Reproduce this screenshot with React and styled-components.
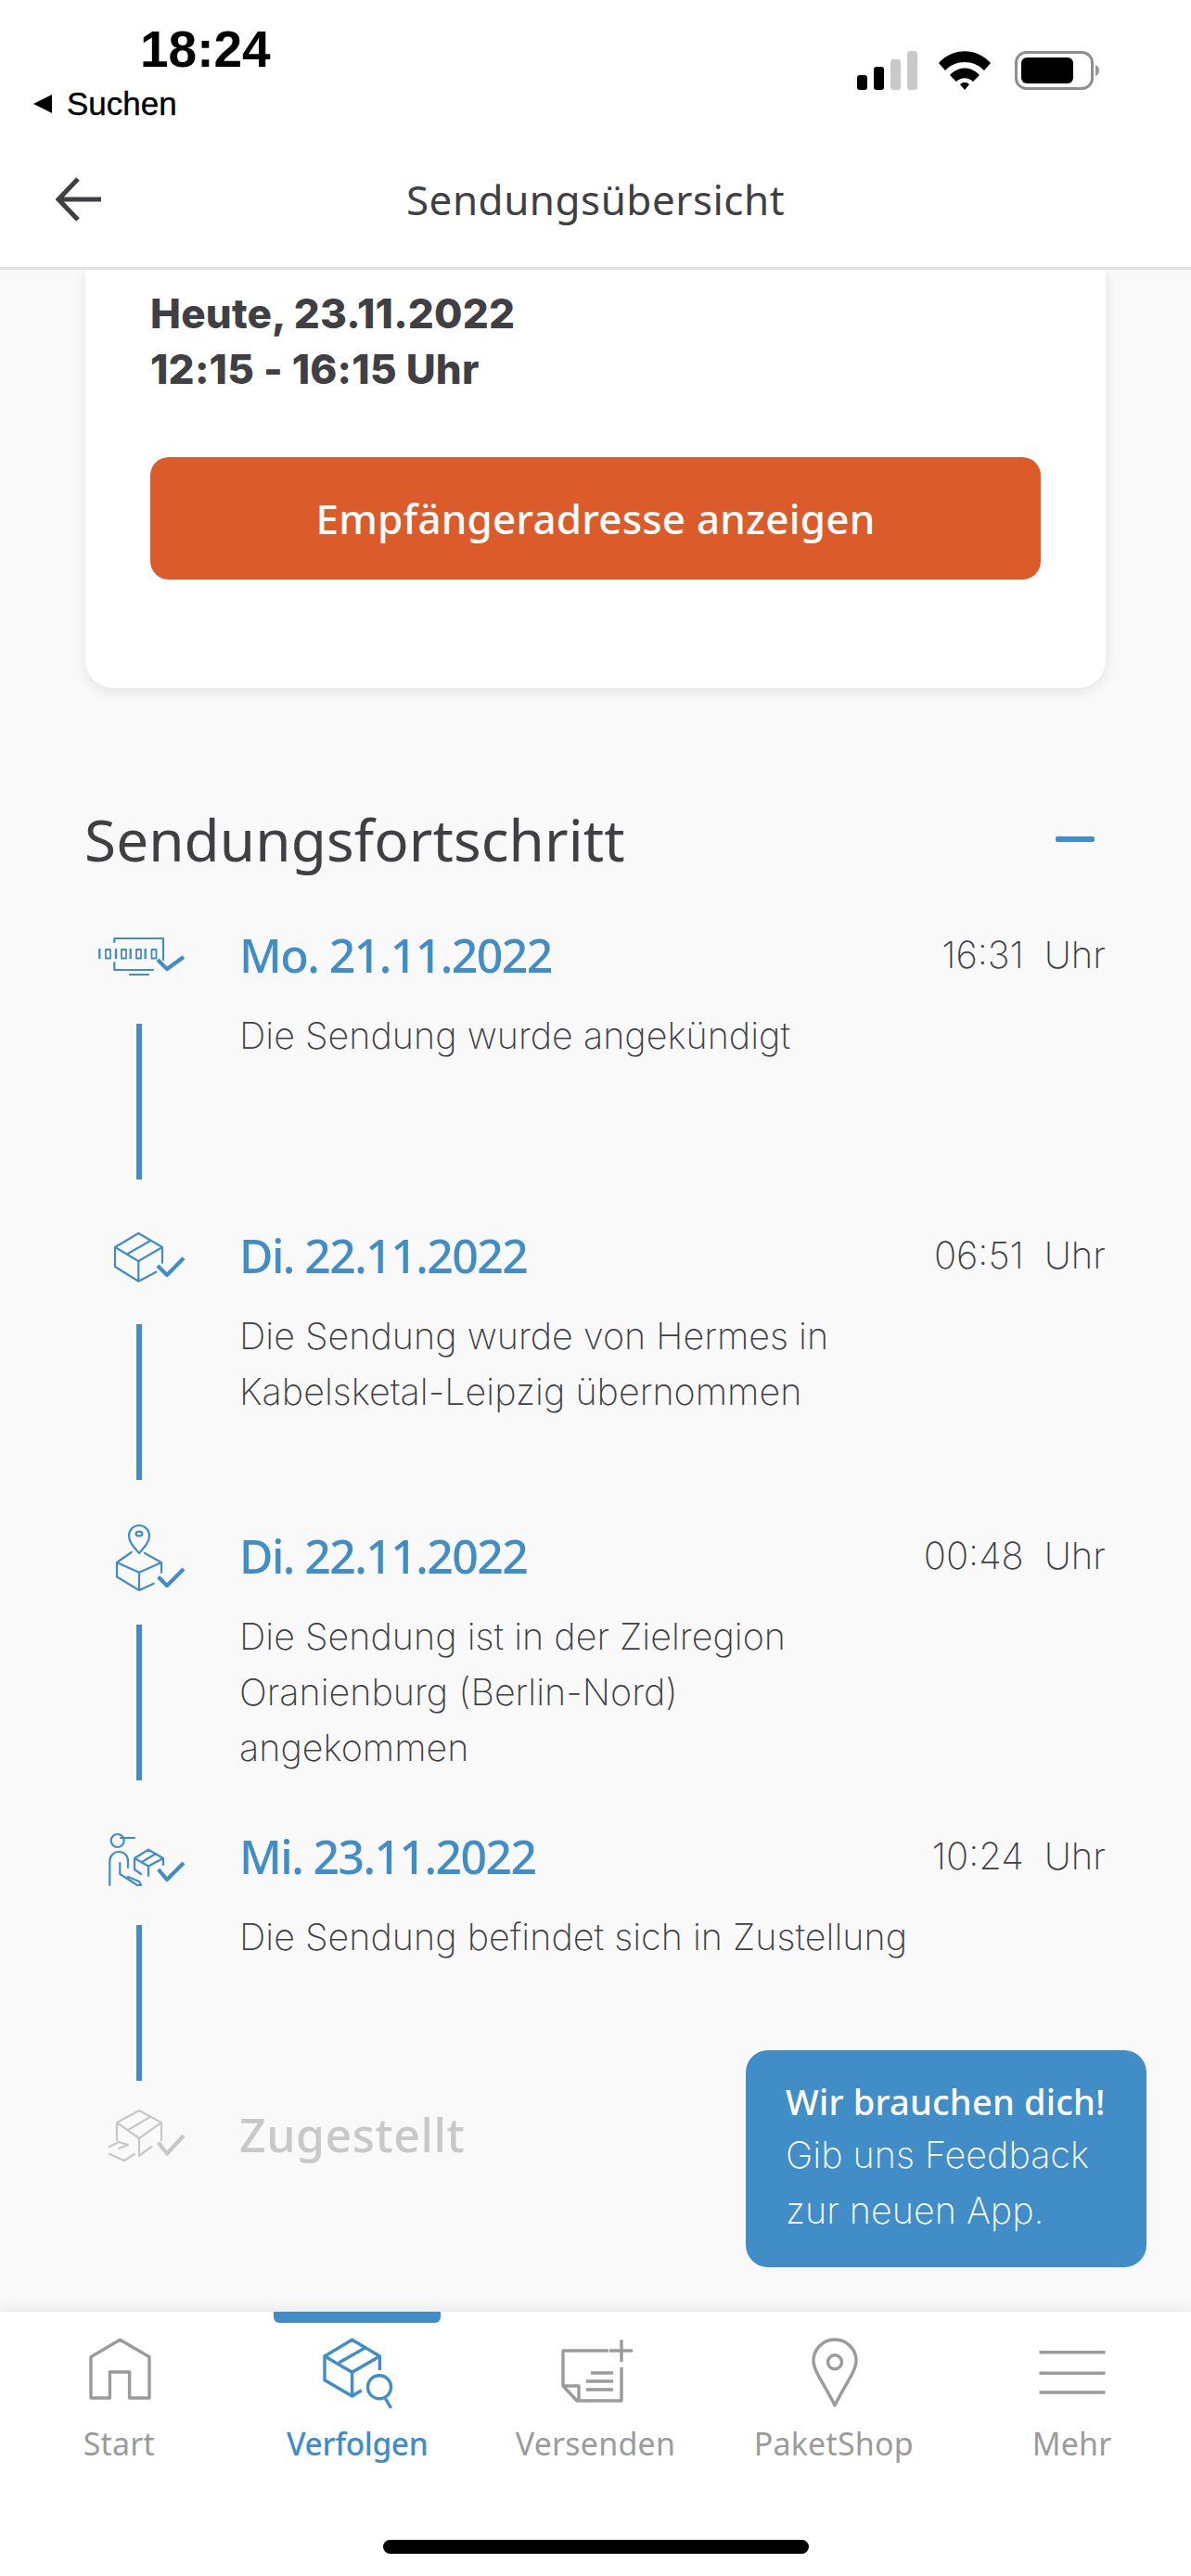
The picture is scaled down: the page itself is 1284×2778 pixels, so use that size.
import React from "react";
import styled, { createGlobalStyle } from "styled-components";

const Blue = "#408dc8";
const Gray = "#9b9b9b";
const Dim = "#c8c8c8";
const Ink = "#3f3f44";
const Title = '"Noto Sans", "Open Sans", sans-serif';
const Light = 'Inter, Lato, "Open Sans", sans-serif';

const Global = createGlobalStyle`
  html, body { margin: 0; padding: 0; background: #fff; }
  * { box-sizing: border-box; }
`;

const Page = styled.div`
  position: relative;
  width: 1284px;
  height: 2778px;
  display: flex;
  flex-direction: column;
  overflow: hidden;
  background: #f9f9f9;
  font-family: ${Title};
`;

const StatusBar = styled.div`
  height: 140px;
  background: #fff;
  display: flex;
  justify-content: space-between;
  padding: 23px 99px 0 36px;
  font-family: "Liberation Sans", Arial, sans-serif;
  color: #000;
`;
const StatusLeft = styled.div`
  display: flex;
  flex-direction: column;
`;
const Clock = styled.div`
  font-size: 55px;
  line-height: 60px;
  font-weight: 700;
  margin-left: 115px;
`;
const BackApp = styled.div`
  display: flex;
  align-items: center;
  gap: 16px;
  margin-top: 10px;
  font-size: 35px;
  line-height: 38px;
  font-weight: 500;
  -webkit-text-stroke: 0.4px #000;
`;
const BackTri = styled.span`
  width: 0;
  height: 0;
  border-top: 10px solid transparent;
  border-bottom: 10px solid transparent;
  border-right: 20px solid #000;
`;
const StatusRight = styled.div`
  display: flex;
  align-items: flex-start;
  gap: 22px;
  padding-top: 32px;
`;

const Header = styled.header`
  height: 151px;
  background: #fff;
  border-bottom: 3px solid #e2e2e2;
  display: grid;
  grid-template-columns: 1fr auto 1fr;
  align-items: center;
  padding: 2px 60px 0;
  flex: none;
  z-index: 1;
`;
const BackArrow = styled.svg`
  display: block;
`;
const HeaderTitle = styled.h1`
  margin: 0;
  font-size: 44px;
  font-weight: 400;
  color: ${Ink};
  letter-spacing: 0.5px;
`;

const Main = styled.main`
  flex: 1;
  min-height: 0;
  padding: 0 92px;
`;
const Card = styled.section`
  height: 451px;
  padding: 17px 70px 0;
  background: #fff;
  border-radius: 0 0 30px 30px;
  box-shadow: 0 4px 14px rgba(0, 0, 0, 0.09);
`;
const Eta = styled.div`
  font-family: Inter, sans-serif;
  font-size: 44px;
  line-height: 60px;
  font-weight: 800;
  letter-spacing: 0.2px;
  color: ${Ink};
`;
const OrangeButton = styled.button`
  display: block;
  width: 960px;
  height: 132px;
  margin-top: 65px;
  border: 0;
  border-radius: 20px;
  background: #db5c2a;
  color: #fff;
  font-family: ${Title};
  font-size: 44px;
  font-weight: 500;
  letter-spacing: 0.2px;
`;
const SectionHead = styled.div`
  display: flex;
  justify-content: space-between;
  align-items: center;
  height: 90px;
  margin-top: 118px;
  margin-left: -1px;
`;
const SectionTitle = styled.h2`
  margin: 0;
  font-size: 62px;
  font-weight: 400;
  color: ${Ink};
  letter-spacing: 0.1px;
`;
const Collapse = styled.span`
  width: 42px;
  height: 6px;
  margin-right: 12px;
  background: ${Blue};
  border-radius: 2px;
`;
const Timeline = styled.div`
  margin-top: 41px;
`;
const Row = styled.div`
  display: grid;
  grid-template-columns: 100px 1fr;
  column-gap: 58px;
  margin-left: 8px;
  height: ${p => (p.$last ? "80px" : "324px")};
  margin-top: ${p => (p.$last ? "-24px" : "0")};
`;
const Rail = styled.div`
  display: flex;
  flex-direction: column;
`;
const Line = styled.div`
  width: 6px;
  height: 168px;
  margin: 33px 0 0 47px;
  background: ${Blue};
`;
const Body = styled.div`
  min-width: 0;
`;
const DateRow = styled.div`
  display: flex;
  justify-content: space-between;
  align-items: center;
  height: 80px;
`;
const DateText = styled.div`
  font-size: 50px;
  font-weight: 500;
  color: ${p => (p.$muted ? Dim : Blue)};
  letter-spacing: ${p => (p.$muted ? "0.5px" : "-1.6px")};
  position: relative;
  top: -1px;
`;
const Time = styled.div`
  display: flex;
  gap: 22px;
  font-family: ${Light};
  font-size: 40px;
  font-weight: 200;
  color: ${Ink};
  position: relative;
  top: -2px;
`;
const Desc = styled.div`
  margin-top: 16px;
  font-family: ${Light};
  font-size: 39.5px;
  line-height: 60px;
  font-weight: 200;
  color: ${Ink};
  white-space: nowrap;
`;

const Bubble = styled.aside`
  position: absolute;
  left: 804px;
  top: 2211px;
  width: 432px;
  height: 234px;
  padding: 28px 0 0 43px;
  background: ${Blue};
  border-radius: 24px;
  color: #fff;
  font-family: ${Light};
  font-size: 39.5px;
  line-height: 60px;
  font-weight: 200;
`;
const BubbleHead = styled.div`
  font-family: ${Title};
  font-weight: 500;
  font-size: 38px;
  line-height: 55px;
  letter-spacing: 0.2px;
`;

const TabBar = styled.nav`
  position: relative;
  flex: none;
  height: 285px;
  background: #fff;
  display: grid;
  grid-template-columns: repeat(5, 1fr);
  align-items: start;
  padding-top: 22px;
  box-shadow: 0 -4px 14px rgba(0, 0, 0, 0.07);
`;
const Tab = styled.div`
  position: relative;
  display: flex;
  flex-direction: column;
  align-items: center;
  color: ${p => (p.$active ? Blue : Gray)};
  font-size: ${p => (p.$active ? "33.5px" : "34px")};
  font-weight: ${p => (p.$active ? 500 : 400)};
  letter-spacing: ${p => (p.$active ? "-0.4px" : "0.2px")};
`;
const Indicator = styled.span`
  position: absolute;
  top: -22px;
  width: 180px;
  height: 12px;
  background: ${Blue};
  border-radius: 0 0 6px 6px;
`;
const TabLabel = styled.span`
  margin-top: 6px;
  line-height: 48px;
`;
const HomeBar = styled.span`
  position: absolute;
  left: 413px;
  top: 246px;
  width: 459px;
  height: 15px;
  background: #000;
  border-radius: 8px;
`;

const StepSvg = styled.svg`
  display: block;
  flex: none;
  width: 100px;
  height: 80px;
  overflow: visible;
  fill: none;
  stroke: ${p => (p.$muted ? Dim : Blue)};
  stroke-width: 2.2;
  stroke-linejoin: round;
  stroke-linecap: round;
`;
const TabSvg = styled.svg`
  display: block;
  width: 100px;
  height: 90px;
  overflow: visible;
  fill: none;
  stroke: currentColor;
  stroke-width: 3.4;
  stroke-linejoin: round;
`;

const Check = ({ d }) => <path d={d} strokeWidth="4.2" strokeLinecap="butt" />;

const IconBinary = () => (
  <StepSvg viewBox="0 0 100 80">
    <path d="M23.3 25V21H76V44M23.3 47V55H65M40 60H60" />
    <path d="M7.3 32V43M25 32V43M40.7 32V43M56.7 32V43" strokeWidth="2.4" strokeLinecap="butt" />
    <g strokeWidth="1.8">
      <rect x="14" y="33" width="5" height="9.5" />
      <rect x="31" y="33" width="5" height="9.5" />
      <rect x="47" y="33" width="5" height="9.5" />
      <rect x="63.5" y="33" width="5" height="9.5" />
    </g>
    <Check d="M70 44L80 54L98 41" />
  </StepSvg>
);
const IconBox = () => (
  <StepSvg viewBox="0 0 100 80">
    <path d="M49.3 15L24 30L49.3 45L75 30ZM24 30V51L49.3 66.7L68.3 56.7M49.3 45V66.7M75 30V46.7M38.3 36.7L61.7 23.3" />
    <Check d="M70 50L80 60L98 41.7" />
  </StepSvg>
);
const IconPin = () => (
  <StepSvg viewBox="0 0 100 80">
    <path d="M50 36C44 29 39 24 39 17A11 11 0 0 1 61 17C61 24 56 29 50 36Z" />
    <ellipse cx="50" cy="15" rx="3.4" ry="2.4" />
    <path d="M41.7 35L26 46L50 56.7L74 46L56 36M26 46V61.5L50 76L65.7 68.7M50 56.7V76M74 46V56.7" />
    <Check d="M70.7 61.5L80 71L98 53" />
  </StepSvg>
);
const IconCourier = () => (
  <StepSvg viewBox="0 0 100 80">
    <circle cx="26.7" cy="22" r="7" />
    <path d="M30 19H45" />
    <path d="M18.3 70V44C18.3 38 23 34 28 34C34 34 38 38 38 44V51" />
    <path d="M29.3 46V58L48 70H52L50 66L38 61" />
    <path d="M45 41L60 31.7L76 41L60 49.5ZM45 41V53L52 58M60 49.5V60M76 41V48M53 45L68 36" />
    <Check d="M70.7 53L80 64L98 46" />
  </StepSvg>
);
const IconHandBox = () => (
  <StepSvg viewBox="0 0 100 80" $muted>
    <path d="M50 13L26 26L50 43L74 26ZM26 26V45M50 43V62L63.3 52M74 26V45M38 34L61.7 20" />
    <path d="M18 52L28 47L38 50L28 54M18 60L34 67L45 60" />
    <Check d="M70.7 47.5L80 59.5L98 40" />
  </StepSvg>
);

const tabs = [
  { label: "Start", icon: <path d="M20 71V26.7L51.4 8.3L83 26.7V71H61.6V43H40.4V71Z" /> },
  {
    label: "Verfolgen",
    active: true,
    icon: (
      <>
        <path d="M44.6 8.3L15 26L44.6 43.3L74.4 26ZM15 26V51.7L44.6 69L54.8 62.7M44.6 43.3V69M74.4 26V41M30.3 33L59 16.7" />
        <circle cx="74" cy="59.3" r="12.5" />
        <path d="M80.5 71.7L86.6 82" />
      </>
    ),
  },
  {
    label: "Versenden",
    icon: (
      <>
        <path d="M64 20H15V58L30 74H78V38M15 58H32V74" />
        <path d="M45 44H69M40 53H69M40 62H69M65 20H90M78 8.3V32" />
      </>
    ),
  },
  {
    label: "PaketShop",
    icon: (
      <>
        <path d="M51 79C41 58 28 42 28 31A23 23 0 0 1 74 31C74 42 61 58 51 79Z" />
        <circle cx="51" cy="32.3" r="7.5" />
      </>
    ),
  },
  { label: "Mehr", icon: <path d="M14.5 21.7H85.5M14.5 44.3H85.5M14.5 65H85.5" /> },
];

const steps = [
  { date: "Mo. 21.11.2022", time: "16:31", icon: <IconBinary />, lines: ["Die Sendung wurde angekündigt"] },
  { date: "Di. 22.11.2022", time: "06:51", icon: <IconBox />, lines: ["Die Sendung wurde von Hermes in", "Kabelsketal-Leipzig übernommen"] },
  { date: "Di. 22.11.2022", time: "00:48", icon: <IconPin />, lines: ["Die Sendung ist in der Zielregion", "Oranienburg (Berlin-Nord)", "angekommen"] },
  { date: "Mi. 23.11.2022", time: "10:24", icon: <IconCourier />, lines: ["Die Sendung befindet sich in Zustellung"] },
];

export default function App() {
  return (
    <Page>
      <Global />
      <StatusBar>
        <StatusLeft>
          <Clock>18:24</Clock>
          <BackApp><BackTri />Suchen</BackApp>
        </StatusLeft>
        <StatusRight>
          <svg width="65" height="42" viewBox="0 0 65 42">
            <rect x="0" y="26" width="11" height="16" rx="3" fill="#000" />
            <rect x="18" y="17" width="11" height="25" rx="3" fill="#000" />
            <rect x="36" y="9" width="11" height="33" rx="3" fill="#c9c9c9" />
            <rect x="54" y="0" width="11" height="42" rx="3" fill="#c9c9c9" />
          </svg>
          <svg width="58" height="42" viewBox="0 0 58 42">
            <path d="M1 13C16 -4 42 -4 57 13L50 21C39 9 19 9 8 21Z" fill="#000" />
            <path d="M13 26C22 16 36 16 45 26L38 33C33 28 25 28 20 33Z" fill="#000" />
            <path d="M24 36C27 33 31 33 34 36L29 42Z" fill="#000" />
          </svg>
          <svg width="91" height="42" viewBox="0 0 91 42" style={{ marginLeft: 3 }}>
            <rect x="1.5" y="1.5" width="82" height="39" rx="11" fill="none" stroke="#8e8e8e" strokeWidth="3" />
            <rect x="7" y="7" width="56" height="28" rx="6" fill="#000" />
            <path d="M87 15C90 16 91 18 91 21C91 24 90 26 87 27Z" fill="#9a9a9a" />
          </svg>
        </StatusRight>
      </StatusBar>
      <Header>
        <BackArrow width="50" height="48" viewBox="0 0 50 48" fill="none" stroke={Ink} strokeWidth="5">
          <path d="M24 2L3 24L24 46M3 24H49" />
        </BackArrow>
        <HeaderTitle>Sendungsübersicht</HeaderTitle>
        <span />
      </Header>
      <Main>
        <Card>
          <Eta>Heute, 23.11.2022<br />12:15 - 16:15 Uhr</Eta>
          <OrangeButton>Empfängeradresse anzeigen</OrangeButton>
        </Card>
        <SectionHead>
          <SectionTitle>Sendungsfortschritt</SectionTitle>
          <Collapse />
        </SectionHead>
        <Timeline>
          {steps.map((s, i) => (
            <Row key={i}>
              <Rail>
                {s.icon}
                <Line />
              </Rail>
              <Body>
                <DateRow>
                  <DateText>{s.date}</DateText>
                  <Time><span>{s.time}</span><span>Uhr</span></Time>
                </DateRow>
                <Desc>{s.lines.map(l => <div key={l}>{l}</div>)}</Desc>
              </Body>
            </Row>
          ))}
          <Row $last>
            <Rail><IconHandBox /></Rail>
            <Body>
              <DateRow><DateText $muted>Zugestellt</DateText></DateRow>
            </Body>
          </Row>
        </Timeline>
      </Main>
      <Bubble>
        <BubbleHead>Wir brauchen dich!</BubbleHead>
        <div>Gib uns Feedback</div>
        <div>zur neuen App.</div>
      </Bubble>
      <TabBar>
        {tabs.map(t => (
          <Tab key={t.label} $active={t.active}>
            {t.active && <Indicator />}
            <TabSvg viewBox="0 0 100 90">{t.icon}</TabSvg>
            <TabLabel>{t.label}</TabLabel>
          </Tab>
        ))}
        <HomeBar />
      </TabBar>
    </Page>
  );
}
